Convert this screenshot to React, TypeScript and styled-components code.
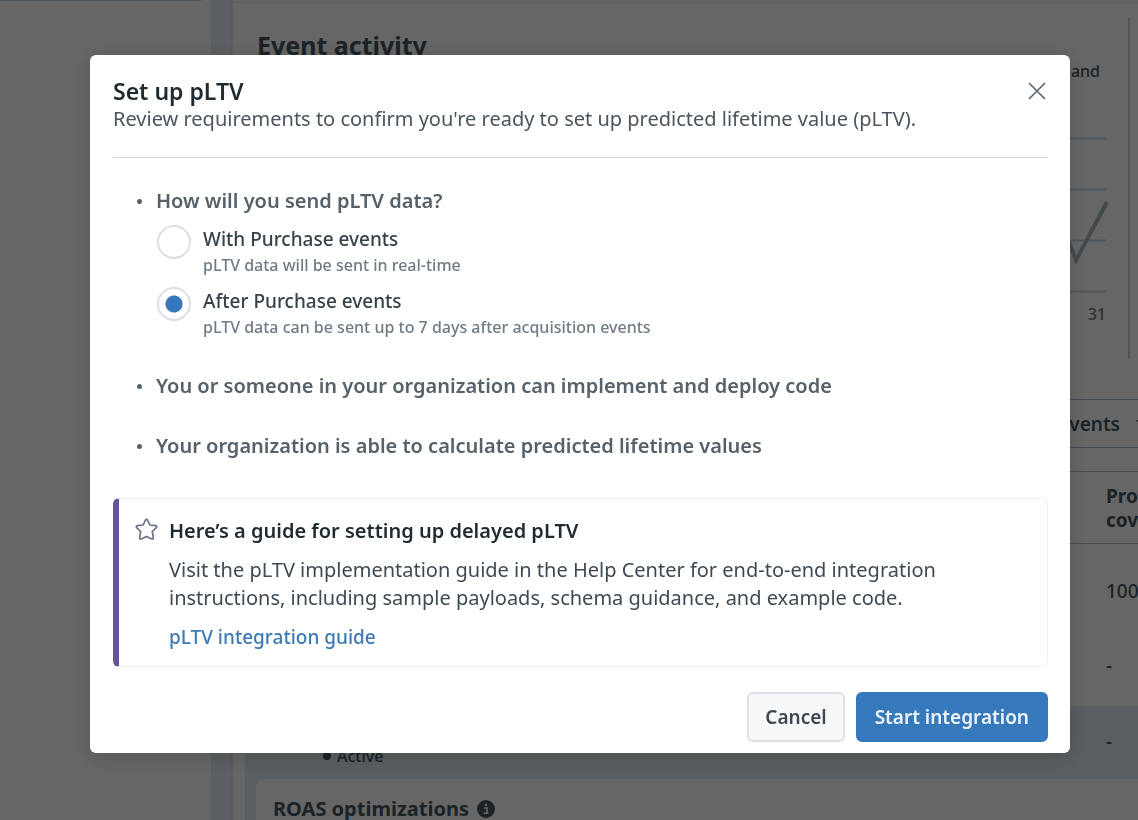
import React, { useState } from "react";
import styled, { createGlobalStyle } from "styled-components";

const GlobalStyle = createGlobalStyle`
  *, *::before, *::after { box-sizing: border-box; }
  body {
    margin: 0;
    background: #fff;
    color: #46555f;
    font-family: "Noto Sans", "Open Sans", sans-serif;
    font-size: 20px;
    line-height: 28px;
  }
  h1, h2, h3, p, ul, fieldset { margin: 0; padding: 0; }
  button, input { font: inherit; }
`;

/* ---------- page behind the dialog ---------- */

const Page = styled.div`
  display: grid;
  grid-template-columns: 211px 22px minmax(0, 1fr);
  height: 100vh;
  overflow: hidden;
`;

const Sidebar = styled.aside`
  border-top: 1px solid #c8dae6;
  margin-right: 10px;
`;

const Gutter = styled.div`
  background: #e4edf3;
  border-right: 2px solid #dae5ec;
`;

const Main = styled.main`
  display: flex;
  flex-direction: column;
  overflow: hidden;
`;

const Activity = styled.section`
  display: flex;
  flex: none;
  justify-content: space-between;
  height: 397px;
  margin-top: 2px;
  border-top: 1px solid #e8eef2;
  padding: 15px 8px 0 24px;
`;

const ActivityTitle = styled.h2`
  padding-top: 10px;
  font-size: 25px;
  line-height: 34px;
`;

const ChartPanel = styled.div`
  width: 240px;
  height: 341px;
  border-right: 2px solid #c9d4dc;
  padding: 40px 22px 0 0;
`;

const Legend = styled.p`
  padding-right: 6px;
  font-size: 16px;
  font-weight: 500;
  line-height: 26px;
  text-align: right;
`;

const Chart = styled.svg`
  display: block;
  width: 100%;
  height: 216px;
  overflow: visible;
`;

const AxisLabel = styled.p`
  color: #6d7b86;
  font-size: 16px;
  font-weight: 500;
  line-height: 28px;
  text-align: right;
`;

const FilterBar = styled.div`
  display: flex;
  flex: none;
  justify-content: flex-end;
  align-items: center;
  gap: 16px;
  height: 49px;
  border: solid #a9bac6;
  border-width: 1px 0;
  white-space: nowrap;
`;

const FilterLabel = styled.span`
  font-size: 19px;
  font-weight: 600;
`;

const Caret = styled.svg`
  flex: none;
  width: 12px;
  height: 8px;
  margin-right: -10px;
`;

const TableArea = styled.div`
  flex: none;
  margin: 23px 0 0 12px;
`;

const EventsTable = styled.table`
  width: 100%;
  border-collapse: collapse;
  table-layout: fixed;
`;

const HeadRow = styled.tr`
  height: 72px;
  border: solid #b4c3cd;
  border-width: 1px 0;
`;

const BodyRow = styled.tr<{ $active?: boolean }>`
  height: ${(p) => (p.$active ? 71 : 81)}px;
  background: ${(p) => (p.$active ? "#dfebf2" : "transparent")};
`;

const HeadCell = styled.th<{ $narrow?: boolean }>`
  width: ${(p) => (p.$narrow ? "32px" : "auto")};
  padding: 0;
  font-size: 19px;
  line-height: 24px;
  text-align: left;
`;

const Cell = styled.td<{ $low?: boolean }>`
  padding: ${(p) => (p.$low ? "14px 0 0" : "0")};
  font-size: 19px;
  font-weight: 500;
`;

const StatusCell = styled.td`
  padding: 0 0 8px 78px;
  vertical-align: bottom;
`;

const Status = styled.span`
  display: flex;
  align-items: center;
  gap: 6px;
  font-size: 16px;
  font-weight: 500;
  line-height: 26px;
  &::before {
    content: "";
    width: 8px;
    height: 8px;
    border-radius: 50%;
    background: currentColor;
  }
`;

const Optimizations = styled.section`
  flex: 1 0 auto;
  margin-left: 12px;
  padding: 2px 0 0 11px;
  background: #dfebf2;
`;

const OptimizationsCard = styled.div`
  display: flex;
  align-items: center;
  gap: 8px;
  height: 100%;
  padding: 16px 17px;
  border-radius: 8px 0 0 0;
  background: #fff;
`;

const CardTitle = styled.h2`
  font-size: 20px;
  line-height: 28px;
`;

const InfoIcon = styled.svg`
  width: 18px;
  height: 18px;
`;

/* ---------- dialog ---------- */

const Overlay = styled.div`
  position: fixed;
  inset: 0;
  display: flex;
  align-items: flex-start;
  padding: 55px 68px 0 90px;
  background: rgba(0, 0, 0, 0.6);
`;

const Dialog = styled.div`
  flex: 1;
  min-width: 0;
  padding: 22px 22px 11px 23px;
  border-radius: 6px;
  background: #fff;
  box-shadow: 0 4px 20px rgba(0, 0, 0, 0.18);
`;

const DialogHeader = styled.header`
  display: flex;
  justify-content: space-between;
  align-items: flex-start;
  padding-bottom: 24px;
  border-bottom: 1px solid #d3d8dc;
`;

const DialogTitle = styled.h1`
  color: #1f2a31;
  font-size: 23px;
  font-weight: 600;
  line-height: 28px;
`;

const Subtitle = styled.p`
  color: #4a555e;
`;

const CloseButton = styled.button`
  display: flex;
  padding: 5px 2px;
  border: 0;
  background: none;
  color: #5c676f;
  cursor: pointer;
`;

const CloseIcon = styled.svg`
  width: 18px;
  height: 18px;
`;

const Requirements = styled.ul`
  display: flex;
  flex-direction: column;
  gap: 32px;
  padding: 29px 0 38px 24px;
  list-style: none;
`;

const Requirement = styled.li`
  display: flex;
  gap: 14px;
  color: #56616a;
  &::before {
    content: "";
    flex: none;
    width: 5px;
    height: 5px;
    margin-top: 12px;
    border-radius: 50%;
    background: currentColor;
  }
`;

const RequirementTitle = styled.h2`
  font-size: 20px;
  font-weight: 600;
  line-height: 28px;
`;

const Question = styled.fieldset`
  min-width: 0;
  border: 0;
`;

const QuestionTitle = styled.legend`
  padding: 0;
  font-weight: 600;
`;

const Options = styled.div`
  display: flex;
  flex-direction: column;
  gap: 9px;
  padding: 10px 0 0 1px;
`;

const Option = styled.label`
  display: flex;
  align-items: flex-start;
  gap: 12px;
  cursor: pointer;
`;

const Radio = styled.input`
  appearance: none;
  flex: none;
  width: 34px;
  height: 34px;
  margin: 0;
  border: 2px solid #dce0e4;
  border-radius: 50%;
  background: #fff;
  &:checked {
    background: radial-gradient(circle, #3578bc 8px, #fff 9px);
  }
`;

const OptionText = styled.span`
  display: flex;
  flex-direction: column;
  padding-top: 1px;
  line-height: 26px;
`;

const OptionName = styled.span`
  color: #36424a;
  font-size: 19px;
  font-weight: 500;
`;

const OptionHint = styled.span`
  color: #6f7b85;
  font-size: 16px;
  font-weight: 500;
`;

const Guide = styled.section`
  display: flex;
  gap: 11px;
  padding: 18px 22px 15px 16px;
  border: 1px solid #eef0f2;
  border-left: 6px solid #67539b;
  border-radius: 6px;
`;

const StarIcon = styled.svg`
  flex: none;
  width: 23px;
  height: 23px;
  margin-top: 1px;
`;

const GuideBody = styled.div`
  display: flex;
  flex-direction: column;
  align-items: flex-start;
  gap: 11px;
`;

const GuideTitle = styled.h2`
  color: #1f2a31;
  font-size: 20px;
  font-weight: 600;
  line-height: 28px;
`;

const GuideText = styled.p`
  max-width: 800px;
  color: #3e4a53;
`;

const GuideLink = styled.a`
  color: #3c7ab6;
  font-size: 19px;
  font-weight: 500;
  text-decoration: none;
`;

const Actions = styled.footer`
  display: flex;
  justify-content: flex-end;
  gap: 11px;
  padding-top: 25px;
`;

const Button = styled.button<{ $primary?: boolean }>`
  height: 50px;
  padding: 0 ${(p) => (p.$primary ? 17 : 16)}px;
  border: 2px solid ${(p) => (p.$primary ? "#3578bc" : "#dde1e5")};
  border-radius: 6px;
  background: ${(p) => (p.$primary ? "#3578bc" : "#f7f8fa")};
  color: ${(p) => (p.$primary ? "#eef3f8" : "#3e4850")};
  font-size: 19px;
  font-weight: 600;
  cursor: pointer;
`;

const options = [
  { id: "with", name: "With Purchase events", hint: "pLTV data will be sent in real-time" },
  {
    id: "after",
    name: "After Purchase events",
    hint: "pLTV data can be sent up to 7 days after acquisition events",
  },
];

function Background() {
  return (
    <Page>
      <Sidebar />
      <Gutter />
      <Main>
        <Activity>
          <ActivityTitle>Event activity</ActivityTitle>
          <ChartPanel>
            <Legend>and</Legend>
            <Chart viewBox="0 0 216 216" preserveAspectRatio="xMaxYMin meet" fill="none">
              <path d="M0 54.5H216M0 105.5H216M0 156.5H216M0 207.5H216" stroke="#c9d8e1" strokeWidth="2" />
              <path d="M160 110L186 176L217 118" stroke="#a9b9c4" strokeWidth="4" />
            </Chart>
            <AxisLabel>31</AxisLabel>
          </ChartPanel>
        </Activity>
        <FilterBar>
          <FilterLabel>Events</FilterLabel>
          <Caret viewBox="0 0 12 8">
            <path d="M0 0H12L6 7Z" fill="#46555f" />
          </Caret>
        </FilterBar>
        <TableArea>
          <EventsTable>
            <thead>
              <HeadRow>
                <HeadCell />
                <HeadCell $narrow>
                  Pro
                  <br />
                  cov
                </HeadCell>
              </HeadRow>
            </thead>
            <tbody>
              <BodyRow>
                <Cell />
                <Cell $low>100</Cell>
              </BodyRow>
              <BodyRow>
                <Cell />
                <Cell>-</Cell>
              </BodyRow>
              <BodyRow $active>
                <StatusCell>
                  <Status>Active</Status>
                </StatusCell>
                <Cell>-</Cell>
              </BodyRow>
            </tbody>
          </EventsTable>
        </TableArea>
        <Optimizations>
          <OptimizationsCard>
            <CardTitle>ROAS optimizations</CardTitle>
            <InfoIcon viewBox="0 0 18 18">
              <circle cx="9" cy="9" r="9" fill="#46555f" />
              <path d="M7 8H10V13M6.5 13.2H11.5" stroke="#fff" strokeWidth="1.6" fill="none" />
              <circle cx="9" cy="4.8" r="1.3" fill="#fff" />
            </InfoIcon>
          </OptimizationsCard>
        </Optimizations>
      </Main>
    </Page>
  );
}

export default function App() {
  const [choice, setChoice] = useState("after");
  return (
    <>
      <GlobalStyle />
      <Background />
      <Overlay>
        <Dialog role="dialog" aria-modal="true" aria-labelledby="dialog-title">
          <DialogHeader>
            <div>
              <DialogTitle id="dialog-title">Set up pLTV</DialogTitle>
              <Subtitle>
                Review requirements to confirm you're ready to set up predicted lifetime value (pLTV).
              </Subtitle>
            </div>
            <CloseButton aria-label="Close">
              <CloseIcon viewBox="0 0 18 18">
                <path d="M1.5 1.5L16.5 16.5M16.5 1.5L1.5 16.5" stroke="currentColor" strokeWidth="1.7" strokeLinecap="round" />
              </CloseIcon>
            </CloseButton>
          </DialogHeader>

          <Requirements>
            <Requirement>
              <Question>
                <QuestionTitle>How will you send pLTV data?</QuestionTitle>
                <Options>
                  {options.map((o) => (
                    <Option key={o.id}>
                      <Radio
                        type="radio"
                        name="timing"
                        value={o.id}
                        checked={choice === o.id}
                        onChange={() => setChoice(o.id)}
                      />
                      <OptionText>
                        <OptionName>{o.name}</OptionName>
                        <OptionHint>{o.hint}</OptionHint>
                      </OptionText>
                    </Option>
                  ))}
                </Options>
              </Question>
            </Requirement>
            <Requirement>
              <RequirementTitle>You or someone in your organization can implement and deploy code</RequirementTitle>
            </Requirement>
            <Requirement>
              <RequirementTitle>Your organization is able to calculate predicted lifetime values</RequirementTitle>
            </Requirement>
          </Requirements>

          <Guide>
            <StarIcon viewBox="0 0 23 23" fill="none">
              <path
                d="M10.4 2.2Q11.5 .4 12.6 2.2L14.8 7L20.4 7.6Q22.7 8.1 21.1 9.9L17.3 13.5L18.3 19.4Q18.4 21.9 16.2 20.8L11.5 18.4L6.8 20.8Q4.6 21.9 4.7 19.4L5.7 13.5L1.9 9.9Q.3 8.1 2.6 7.6L8.2 7Z"
                stroke="#6c7188"
                strokeWidth="1.7"
                strokeLinejoin="round"
              />
            </StarIcon>
            <GuideBody>
              <GuideTitle>Here’s a guide for setting up delayed pLTV</GuideTitle>
              <GuideText>
                Visit the pLTV implementation guide in the Help Center for end-to-end integration
                instructions, including sample payloads, schema guidance, and example code.
              </GuideText>
              <GuideLink href="#guide">pLTV integration guide</GuideLink>
            </GuideBody>
          </Guide>

          <Actions>
            <Button>Cancel</Button>
            <Button $primary>Start integration</Button>
          </Actions>
        </Dialog>
      </Overlay>
    </>
  );
}
